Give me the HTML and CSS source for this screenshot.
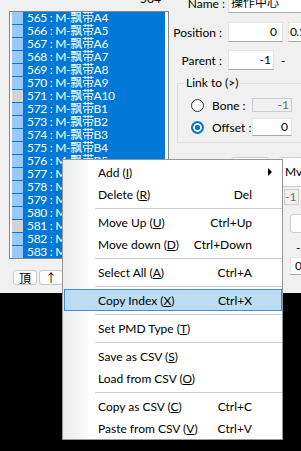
FILE: index.html
```html
<!DOCTYPE html>
<html lang="zh">
<head>
    <meta charset="UTF-8">
    <meta name="viewport" content="width=device-width, initial-scale=1.0">
    <title>Bone list</title>
    <link rel="stylesheet" href="styles.css">
</head>
<body>
    <div class="window">
        <div class="left">
            <div class="count">584</div>
            <div class="list">
                <div class="row"><span class="ico"></span><span class="txt">565 : M-飘带A4</span></div>
                <div class="row"><span class="ico"></span><span class="txt">566 : M-飘带A5</span></div>
                <div class="row"><span class="ico"></span><span class="txt">567 : M-飘带A6</span></div>
                <div class="row"><span class="ico"></span><span class="txt">568 : M-飘带A7</span></div>
                <div class="row"><span class="ico"></span><span class="txt">569 : M-飘带A8</span></div>
                <div class="row"><span class="ico"></span><span class="txt">570 : M-飘带A9</span></div>
                <div class="row"><span class="ico gray"></span><span class="txt">571 : M-飘带A10</span></div>
                <div class="row"><span class="ico"></span><span class="txt">572 : M-飘带B1</span></div>
                <div class="row"><span class="ico"></span><span class="txt">573 : M-飘带B2</span></div>
                <div class="row"><span class="ico"></span><span class="txt">574 : M-飘带B3</span></div>
                <div class="row"><span class="ico"></span><span class="txt">575 : M-飘带B4</span></div>
                <div class="row"><span class="ico"></span><span class="txt">576 : M-飘带B5</span></div>
                <div class="row"><span class="ico"></span><span class="txt">577 : M</span></div>
                <div class="row"><span class="ico"></span><span class="txt">578 : M</span></div>
                <div class="row"><span class="ico"></span><span class="txt">579 : M</span></div>
                <div class="row"><span class="ico"></span><span class="txt">580 : M</span></div>
                <div class="row"><span class="ico gray"></span><span class="txt">581 : M</span></div>
                <div class="row"><span class="ico"></span><span class="txt">582 : M</span></div>
                <div class="row"><span class="ico"></span><span class="txt">583 : M</span></div>
            </div>
            <div class="nav">
                <button class="nav-btn">頂</button>
                <button class="nav-btn">↑</button>
            </div>
        </div>

        <div class="right">
            <div class="field name-row">
                <span class="label">Name :</span>
                <span class="box name-box">操作中心</span>
            </div>
            <div class="field pos-row">
                <span class="label">Position :</span>
                <span class="box num">0</span>
                <span class="box num2">0.1</span>
            </div>
            <div class="field parent-row">
                <span class="label">Parent :</span>
                <span class="box num parent-box">-1</span>
                <span class="dash">-</span>
            </div>

            <fieldset class="link">
                <legend>Link to (&gt;)</legend>
                <div class="radio-row first">
                    <span class="radio"></span>
                    <span class="rlabel">Bone :</span>
                    <span class="box off">-1</span>
                </div>
                <div class="radio-row">
                    <span class="radio on"></span>
                    <span class="rlabel">Offset :</span>
                    <span class="box offset-box">0</span>
                </div>
            </fieldset>

            <div class="lower">
                <span class="lbtn wide"></span>
                <span class="lbtn mv">Mv</span>
            </div>
            <div class="side">
                <span class="box off side-box">-1</span>
                <span class="lbtn side-btn"></span>
                <span class="side-dash">-</span>
                <span class="box side-val">0</span>
            </div>
        </div>
    </div>

    <div class="menu">
        <div class="mi"><span>Add (<u>I</u>)</span><span class="arrow"></span></div>
        <div class="mi"><span>Delete (<u>R</u>)</span><span>Del</span></div>
        <div class="sep"></div>
        <div class="mi"><span>Move Up (<u>U</u>)</span><span>Ctrl+Up</span></div>
        <div class="mi"><span>Move down (<u>D</u>)</span><span>Ctrl+Down</span></div>
        <div class="sep"></div>
        <div class="mi"><span>Select All (<u>A</u>)</span><span>Ctrl+A</span></div>
        <div class="sep"></div>
        <div class="mi hot"><span>Copy Index (<u>X</u>)</span><span>Ctrl+X</span></div>
        <div class="sep"></div>
        <div class="mi"><span>Set PMD Type (<u>T</u>)</span></div>
        <div class="sep"></div>
        <div class="mi"><span>Save as CSV (<u>S</u>)</span></div>
        <div class="mi"><span>Load from CSV (<u>O</u>)</span></div>
        <div class="sep"></div>
        <div class="mi"><span>Copy as CSV (<u>C</u>)</span><span>Ctrl+C</span></div>
        <div class="mi"><span>Paste from CSV (<u>V</u>)</span><span>Ctrl+V</span></div>
    </div>
</body>
</html>
```

FILE: styles.css
```css
html, body {
    margin: 0;
}

body {
    width: 301px;
    height: 451px;
    overflow: hidden;
    position: relative;
    background-color: #000;
    font-family: Lato, "Noto Sans CJK SC", sans-serif;
    font-size: 12px;
    color: #000;
}

.window {
    display: flex;
    height: 293px;
    background-color: #f0f0f0;
    overflow: hidden;
}

/* left: bone list */
.left {
    flex: none;
    width: 160px;
    padding-left: 9px;
}

.count {
    margin-top: -7px;
    height: 18px;
    line-height: 12px;
    text-align: right;
    padding-right: 8px;
}

.list {
    box-sizing: border-box;
    width: 160px;
    height: 248px;
    border: 1px solid #828790;
    background-color: #fff;
    padding: 0 3px 0 2px;
    overflow: hidden;
}

.row {
    display: flex;
    height: 13px;
    background-color: #0078d7;
    color: #fff;
}

.ico {
    flex: none;
    width: 11px;
    height: 12px;
    background-color: #99c9fb;
}

.ico.gray {
    background-color: #d3d3d3;
}

.txt {
    padding-left: 4px;
    line-height: 11px;
    letter-spacing: -0.3px;
    white-space: nowrap;
}

.nav {
    display: flex;
    gap: 2px;
    margin: 11px 0 0 4px;
}

.nav-btn {
    box-sizing: border-box;
    width: 24px;
    height: 15px;
    padding: 0;
    border: 1px solid #c9c9c9;
    border-radius: 3px;
    background-color: #fbfbfb;
    font: 12px/13px "Noto Sans CJK SC", sans-serif;
    color: #000;
}

/* right: properties */
.right {
    flex: 1;
    min-width: 0;
}

.field {
    display: flex;
    align-items: center;
    height: 20px;
}

.label {
    flex: none;
    width: 53px;
    text-align: right;
}

.name-row {
    margin-top: -7px;
}

.name-row .label {
    width: 56px;
}

.pos-row {
    margin-top: 9px;
}

.parent-row {
    margin-top: 8px;
}

.box {
    box-sizing: border-box;
    flex: none;
    height: 20px;
    line-height: 18px;
    background-color: #fff;
    border: 1px solid #e3e3e3;
    border-bottom-color: #a9a9a9;
    white-space: nowrap;
    overflow: hidden;
}

.name-box {
    width: 90px;
    margin-left: 3px;
    padding-left: 2px;
}

.num {
    width: 55px;
    margin-left: 6px;
    text-align: right;
    padding-right: 5px;
}

.num2 {
    width: 40px;
    margin-left: 5px;
    padding-left: 1px;
    letter-spacing: -0.6px;
}

.parent-box {
    width: 46px;
    padding-right: 2px;
}

.dash {
    margin-left: 7px;
}

.link {
    margin: 6px -30px 0 8px;
    padding: 0 0 5px 6px;
    border: 1px solid #dcdcdc;
    min-width: 0;
}

.link legend {
    padding: 0 2px;
    line-height: 14px;
}

.radio-row {
    display: flex;
    align-items: center;
    height: 20px;
    margin-top: 2px;
}

.radio-row.first {
    margin-top: 5px;
}

.radio {
    flex: none;
    box-sizing: border-box;
    width: 13px;
    height: 13px;
    margin-left: 7px;
    border: 1px solid #333;
    border-radius: 50%;
    background-color: #fff;
}

.radio.on {
    border: none;
    background: radial-gradient(circle closest-side, #0078d7 0 2.5px, #fff 3px 4px, #0078d7 4.6px);
}

.rlabel {
    width: 40px;
    margin-left: 8px;
}

.off {
    width: 40px;
    height: 14px;
    line-height: 12px;
    background-color: #f0f0f0;
    border-color: #cccccc;
    color: #6d6d6d;
    text-align: right;
    padding-right: 2px;
}

.offset-box {
    width: 40px;
    height: 18px;
    line-height: 16px;
    text-align: right;
    padding-right: 3px;
}

/* controls mostly hidden under the menu */
.lower {
    display: flex;
    margin-top: 14px;
}

.lbtn {
    box-sizing: border-box;
    display: block;
    height: 30px;
    border: 1px solid #cccccc;
    border-radius: 3px;
    background-color: #fdfdfd;
    line-height: 28px;
    white-space: nowrap;
    flex: none;
}

.wide {
    width: 38px;
    margin-left: 62px;
}

.mv {
    width: 40px;
    margin-left: 10px;
    padding-left: 5px;
}

.side {
    display: flex;
    flex-direction: column;
    align-items: flex-start;
    margin: 2px 0 0 115px;
}

.side-box {
    width: 15px;
    height: 16px;
    line-height: 14px;
}

.side-btn {
    width: 30px;
    height: 19px;
    margin: 9px 0 0 6px;
}

.side-dash {
    margin: 8px 0 0 12px;
    line-height: 14px;
}

.side-val {
    width: 30px;
    height: 18px;
    line-height: 16px;
    margin: 2px 0 0 6px;
    padding-left: 4px;
}

/* context menu */
.menu {
    position: absolute;
    left: 62px;
    top: 159px;
    box-sizing: border-box;
    width: 221px;
    height: 281px;
    padding-top: 1px;
    border: 1px solid #979797;
    background: linear-gradient(90deg, #eaeaea, #fafafa 24px, #fff 26px);
}

.mi {
    display: flex;
    justify-content: space-between;
    align-items: center;
    box-sizing: border-box;
    height: 22px;
    margin-left: 1px;
    padding: 0 29px 0 33px;
    border: 1px solid transparent;
    white-space: nowrap;
}

.mi.hot {
    background-color: #bcdcf4;
    border-color: #3d8ee0;
}

.arrow {
    width: 0;
    height: 0;
    border-left: 4px solid #000;
    border-top: 4px solid transparent;
    border-bottom: 4px solid transparent;
    margin-right: -20px;
}

.sep {
    height: 1px;
    margin: 3px 0 2px 32px;
    background-color: #cfcfcf;
}
```
